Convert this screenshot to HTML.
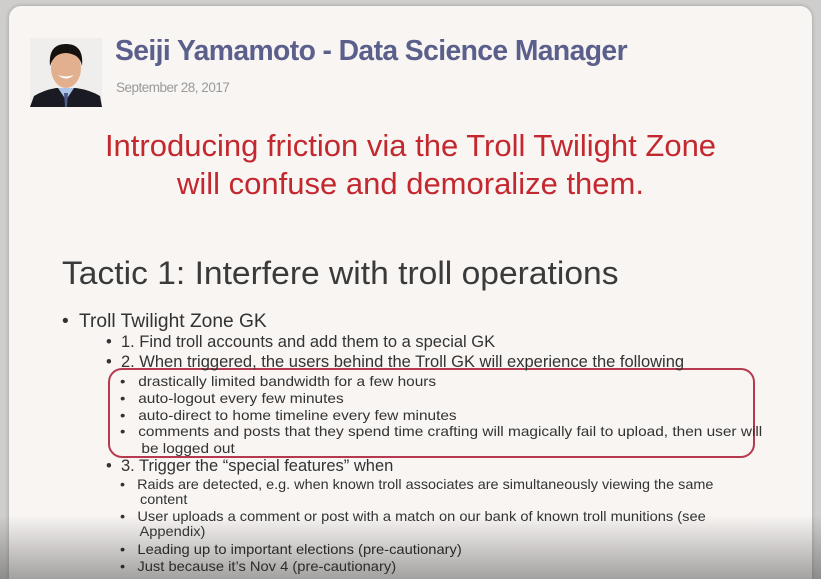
<!DOCTYPE html>
<html><head><meta charset="utf-8"><style>
html,body{margin:0;padding:0;width:821px;height:579px;overflow:hidden;background:#cfcecd;font-family:"Liberation Sans",sans-serif;position:relative;}
.card{position:absolute;left:9px;top:6px;width:803px;height:573px;background:#f8f5f3;border-radius:12px 12px 0 0;box-shadow:0 0 4px rgba(0,0,0,.25);}
.t{position:absolute;white-space:nowrap;transform-origin:left top;}
.photo{position:absolute;left:30px;top:38px;width:72px;height:69px;background:#efeeec;overflow:hidden;}
.shade{position:absolute;left:0;top:515px;width:821px;height:64px;background:linear-gradient(rgba(60,60,60,0),rgba(60,60,60,.45));}
</style></head><body>
<div class="card"></div>
<div class="photo">
<svg width="72" height="69" viewBox="0 0 72 69">
<path d="M0 69 L4 58 Q14 52 26 50 L46 50 Q60 52 70 58 L72 69Z" fill="#1a1b22"/>
<path d="M28 50 L36 62 L44 50Z" fill="#a9c4e6"/>
<path d="M34 55 L38 55 L37 69 L35 69Z" fill="#4a5a8a"/>
<ellipse cx="36" cy="30" rx="15" ry="20" fill="#e2b08f"/>
<path d="M20 28 Q18 6 36 6 Q54 6 52 28 Q50 16 36 15 Q24 15 20 28Z" fill="#15110f"/>
<path d="M28 37 Q36 44 44 37 Q36 40 28 37Z" fill="#fff"/>
</svg></div>
<div class="t" style="left:115px;top:34px;font-size:28.3px;font-weight:bold;color:#5b5f8b;letter-spacing:-0.6px;">Seiji Yamamoto - Data Science Manager</div>
<div class="t" style="left:116px;top:80px;font-size:13.5px;color:#9a9a9a;letter-spacing:-0.5px;">September 28, 2017</div>
<div class="t" style="left:0;width:821px;text-align:center;top:127px;font-size:31px;color:#c4282f;line-height:38px;">Introducing friction via the Troll Twilight Zone<br>will confuse and demoralize them.</div>
<div class="t" style="left:62px;top:255px;font-size:32px;color:#3a3a3a;transform:scaleX(1.05);">Tactic 1: Interfere with troll operations</div>
<div style="position:absolute;left:108px;top:368px;width:643px;height:86px;border:2px solid #b53a4f;border-radius:14px;"></div>
<div class="t" style="left:62px;top:311px;font-size:19px;color:#333;transform:scaleX(1.01);">•&nbsp; Troll Twilight Zone GK</div>
<div class="t" style="left:106px;top:332px;font-size:16.5px;color:#333;line-height:20px;">•&nbsp; 1. Find troll accounts and add them to a special GK<br>•&nbsp; 2. When triggered, the users behind the Troll GK will experience the following</div>
<div class="t" style="left:120px;top:373px;font-size:14px;color:#333;transform:scaleX(1.1);line-height:16.8px;">•&nbsp;&nbsp; drastically limited bandwidth for a few hours<br>•&nbsp;&nbsp; auto-logout every few minutes<br>•&nbsp;&nbsp; auto-direct to home timeline every few minutes<br>•&nbsp;&nbsp; comments and posts that they spend time crafting will magically fail to upload, then user will<br>&nbsp;&nbsp;&nbsp;&nbsp; be logged out</div>
<div class="t" style="left:106px;top:457px;font-size:16.5px;color:#333;">•&nbsp; 3. Trigger the “special features” when</div>
<div class="t" style="left:120px;top:477px;font-size:14px;color:#333;transform:scaleX(1.03);line-height:15px;">•&nbsp;&nbsp; Raids are detected, e.g. when known troll associates are simultaneously viewing the same<br>&nbsp;&nbsp;&nbsp;&nbsp; content</div>
<div class="t" style="left:120px;top:509px;font-size:14px;color:#333;transform:scaleX(1.045);line-height:15px;">•&nbsp;&nbsp; User uploads a comment or post with a match on our bank of known troll munitions (see<br>&nbsp;&nbsp;&nbsp;&nbsp; Appendix)</div>
<div class="t" style="left:120px;top:541px;font-size:14px;color:#222;transform:scaleX(1.05);line-height:17px;">•&nbsp;&nbsp; Leading up to important elections (pre-cautionary)<br>•&nbsp;&nbsp; Just because it’s Nov 4 (pre-cautionary)</div>
<div class="shade"></div>
</body></html>
